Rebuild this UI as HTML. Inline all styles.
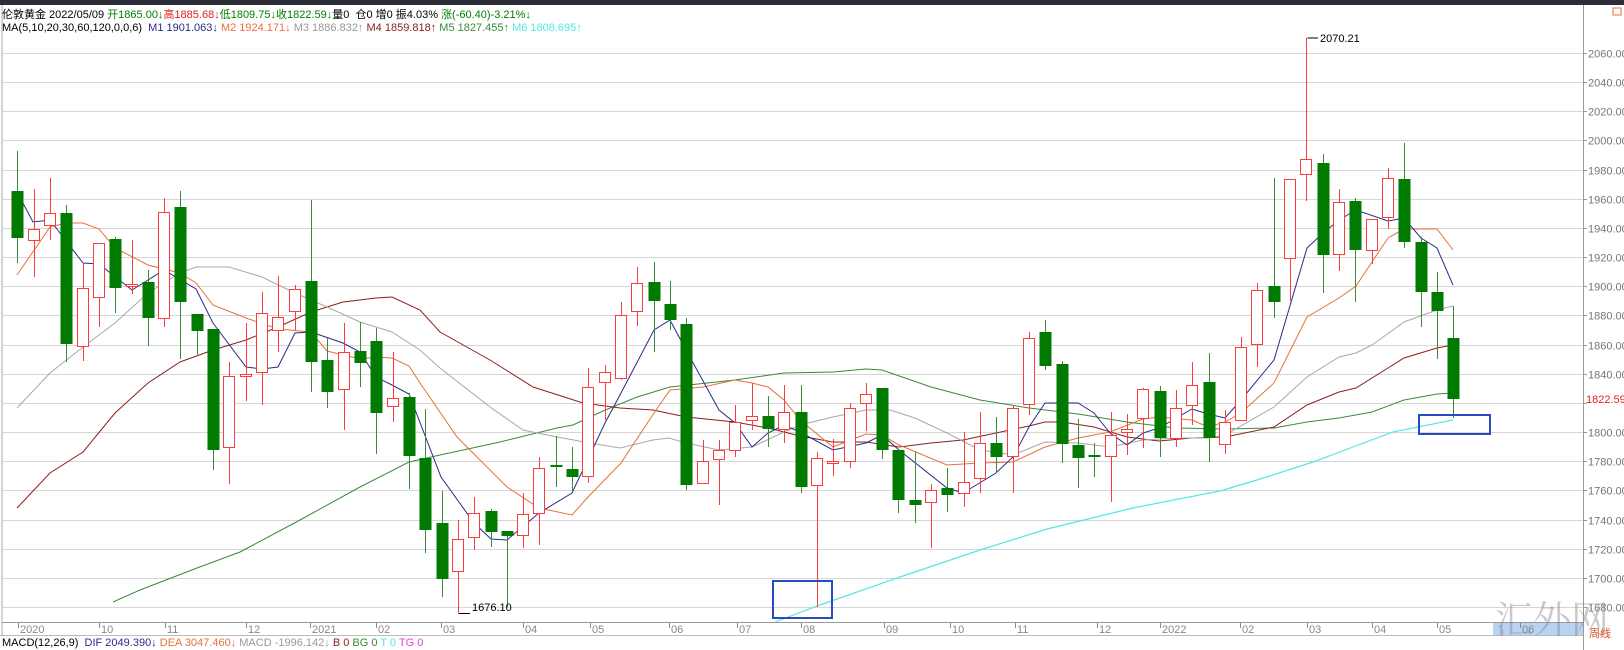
<!DOCTYPE html>
<html><head><meta charset="utf-8">
<style>
html,body{margin:0;padding:0;background:#fff;}
body{width:1624px;height:650px;overflow:hidden;position:relative;font-family:"Liberation Sans","Noto Sans CJK SC",sans-serif;}
svg{position:absolute;left:0;top:0;}
.t{position:absolute;font-size:11px;white-space:nowrap;line-height:13px;}
</style></head><body>
<svg id="s" width="1624" height="650" xmlns="http://www.w3.org/2000/svg"></svg>
<div class="t" style="left:2px;top:9px;color:#000">伦敦黄金 2022/05/09 <span style="color:#008000">开1865.00↓</span><span style="color:#e02020">高1885.68↓</span><span style="color:#008000">低1809.75↓</span><span style="color:#008000">收1822.59↓</span>量0&nbsp; 仓0 增0 振4.03% <span style="color:#008000">涨(-60.40)-3.21%↓</span></div>
<div class="t" style="left:2px;top:22px;color:#000">MA(5,10,20,30,60,120,0,0,6)&nbsp; <span style="color:#2b2b8a">M1 1901.063↓</span> <span style="color:#e8703a">M2 1924.171↓</span> <span style="color:#999">M3 1886.832↑</span> <span style="color:#8b2020">M4 1859.818↑</span> <span style="color:#3a8a3a">M5 1827.455↑</span> <span style="color:#55e5e5">M6 1808.695↑</span></div>
<div class="t" style="left:2px;top:637px;color:#000">MACD(12,26,9)&nbsp; <span style="color:#2b2b8a">DIF 2049.390↓</span> <span style="color:#e8703a">DEA 3047.460↓</span> <span style="color:#999">MACD -1996.142↓</span> <span style="color:#8b2020">B 0</span> <span style="color:#3a8a3a">BG 0</span> <span style="color:#55e5e5">T 0</span> <span style="color:#e040e0">TG 0</span></div>
<script>
var s=document.getElementById('s'),h='';
function Y(p){return 53+(2060-p)*1.458;}
h+='<rect x="0" y="0" width="1624" height="5" fill="#2a2d36"/>';
h+='<line x1="2" y1="5" x2="2" y2="635" stroke="#aaa"/>';
for(var p=2060;p>=1680;p-=20){var y=Math.round(Y(p))+0.5;
h+='<line x1="2" y1="'+y+'" x2="1583" y2="'+y+'" stroke="#d6d6d6" stroke-width="1"/>';
h+='<line x1="1583" y1="'+y+'" x2="1587" y2="'+y+'" stroke="#999"/>';
if(p!=1820)h+='<text x="1588" y="'+(y+4)+'" font-size="11" fill="#777" font-family="Liberation Sans">'+p+'.00</text>';}
h+='<text x="1586" y="'+(Y(1822.59)+4)+'" font-size="11" fill="#e02020" font-family="Liberation Sans">1822.59</text>';
h+='<rect x="1613" y="8" width="8" height="7" fill="none" stroke="#e8703a"/>';
h+='<line x1="1583.5" y1="5" x2="1583.5" y2="650" stroke="#999"/>';
h+='<line x1="2" y1="622.5" x2="1583" y2="622.5" stroke="#999"/>';
h+='<line x1="0" y1="635.5" x2="1583" y2="635.5" stroke="#bbb"/>';
h+='<rect x="1493" y="623" width="90" height="12" fill="#b8d4f2"/>';
var ml=[[18,'2020'],[99,'10'],[165,'11'],[246,'12'],[310,'2021'],[376,'02'],[441,'03'],[523,'04'],[590,'05'],[669,'06'],[737,'07'],[801,'08'],[884,'09'],[950,'10'],[1015,'11'],[1097,'12'],[1160,'2022'],[1240,'02'],[1307,'03'],[1372,'04'],[1437,'05'],[1520,'06']];
ml.forEach(function(m){h+='<line x1="'+(m[0]+.5)+'" y1="623" x2="'+(m[0]+.5)+'" y2="628" stroke="#888"/><text x="'+(m[0]+2)+'" y="633" font-size="11" fill="#888" font-family="Liberation Sans">'+m[1]+'</text>';});
var C=[[191,238,151,263,1],[229,241,189,277,0],[213,226,178,240,0],[213,344,205,362,1],[288,347,263,361,0],[243,298,243,327,0],[239,288,237,313,1],[284,287,240,294,0],[282,318,270,346,1],[212,319,198,327,0],[207,302,191,359,1],[314,331,314,356,1],[329,450,329,470,1],[376,448,362,484,0],[374,377,323,401,0],[313,373,292,405,0],[317,331,276,352,0],[289,312,285,330,0],[281,362,200,392,1],[360,392,338,408,1],[352,390,323,430,0],[351,363,322,387,1],[341,413,328,454,1],[398,407,352,422,0],[397,456,393,489,1],
[458,530,409,553,1],[523,579,491,597,1],[539,572,520,613,0],[513,538,497,550,0],[511,532,509,547,1],[531,536,531,607,1],[514,536,493,548,0],[468,514,457,545,0],[465,466,436,487,1],[469,477,447,492,1],[387,477,368,483,0],[372,383,365,420,0],[315,379,302,380,0],[283,312,267,326,0],[282,301,262,352,1],[304,320,281,330,1],[324,485,318,490,1],[461,484,440,484,0],[450,460,440,505,0],[422,451,405,457,0],[416,421,383,430,0],[416,429,396,447,1],[412,430,385,443,0],[412,487,385,493,1],[458,486,452,607,0],
[461,464,439,476,0],[408,462,403,468,0],[394,404,383,431,0],[388,450,388,459,1],[450,500,450,513,1],[500,505,452,523,1],[490,503,484,548,0],[488,495,468,512,1],[482,494,432,507,0],[443,479,412,493,0],[443,457,417,473,1],[408,457,406,493,0],[338,405,332,415,0],[332,366,320,370,1],[364,444,361,463,1],[445,458,419,488,1],[455,457,443,477,1],[435,457,412,502,0],[429,433,414,455,0],[389,419,388,448,0],[391,438,386,457,1],[408,439,390,447,0],[385,406,362,425,0],[382,438,353,462,1],
[422,445,410,454,0],[347,421,337,421,0],[290,345,283,367,0],[286,302,178,318,1],[179,259,179,301,0],[159,175,38,201,0],[163,255,154,293,1],[202,255,189,271,0],[201,250,198,302,1],[219,251,219,264,0],[178,218,168,229,0],[179,242,143,248,1],[242,292,237,327,1],[292,311,272,359,1],[338,399,306,418,1]];
function L(pts,c,w){return '<polyline fill="none" stroke="'+c+'" stroke-width="'+(w||1)+'" points="'+pts.map(function(a){return a.join(',')}).join(' ')+'"/>';}
h+=L([[113,602],[140,590],[197,568],[240,552],[300,520],[360,487],[409,462],[440,455],[500,442],[557,428],[573,425],[603,411],[637,397],[670,387],[735,380],[784,373],[833,372],[866,369],[882,370],[931,387],[980,400],[1029,408],[1078,414],[1127,422],[1176,428],[1225,429],[1274,428],[1307,422],[1339,418],[1372,412],[1404,400],[1437,394],[1453,393]],'#3a8a3a');
h+=L([[17,508],[50,473],[83,452],[115,413],[148,383],[180,362],[213,350],[246,340],[278,327],[311,312],[343,302],[376,298],[392,297],[420,310],[440,332],[490,360],[533,387],[583,403],[620,408],[653,410],[686,417],[735,422],[768,428],[800,436],[833,442],[866,442],[899,447],[931,443],[963,440],[996,433],[1029,426],[1045,422],[1062,422],[1094,427],[1127,437],[1159,441],[1192,438],[1225,437],[1274,427],[1307,405],[1339,392],[1356,388],[1388,368],[1404,358],[1437,348],[1453,345]],'#8b2020');
h+=L([[17,408],[50,373],[83,347],[115,323],[148,293],[180,273],[196,267],[229,267],[262,277],[295,293],[327,307],[360,322],[392,332],[420,350],[440,368],[490,407],[523,430],[557,437],[590,443],[620,448],[653,440],[669,438],[686,443],[719,450],[752,447],[784,432],[800,425],[833,417],[866,410],[890,410],[915,418],[947,433],[980,450],[1013,455],[1045,442],[1078,443],[1110,447],[1143,440],[1176,438],[1208,438],[1225,435],[1274,407],[1307,377],[1339,357],[1356,353],[1372,345],[1404,322],[1437,310],[1453,306]],'#a8a8a8');
h+=L([[17,275],[50,227],[66,223],[83,223],[99,229],[115,248],[148,265],[180,273],[196,283],[213,305],[246,318],[278,329],[311,332],[327,351],[360,359],[376,357],[392,358],[409,366],[420,383],[457,437],[507,487],[539,508],[572,515],[588,497],[621,463],[654,413],[670,390],[703,387],[735,380],[752,383],[768,387],[784,400],[800,420],[833,447],[866,434],[882,435],[899,445],[947,465],[980,463],[1013,462],[1045,447],[1078,438],[1110,432],[1143,419],[1159,417],[1192,420],[1208,427],[1225,422],[1241,413],[1274,383],[1307,317],[1339,298],[1356,286],[1388,238],[1404,229],[1437,229],[1453,250]],'#e8703a');
h+=L([[17,192],[33,222],[50,220],[83,263],[99,264],[132,290],[164,270],[196,289],[213,323],[246,367],[262,369],[278,367],[295,333],[311,332],[343,343],[360,352],[376,377],[392,385],[409,394],[441,477],[474,523],[491,539],[507,540],[539,513],[572,493],[605,423],[621,393],[654,330],[670,320],[686,350],[719,410],[735,423],[752,447],[768,433],[784,425],[800,432],[833,450],[866,443],[882,435],[899,450],[947,488],[963,493],[996,473],[1013,457],[1029,427],[1045,403],[1078,403],[1094,413],[1110,433],[1127,445],[1143,433],[1159,428],[1192,409],[1208,414],[1225,418],[1241,400],[1274,360],[1307,248],[1323,233],[1339,220],[1356,210],[1388,221],[1404,218],[1421,238],[1437,248],[1453,285]],'#2b2b8a');
h+=L([[775,622],[820,605],[900,577],[980,550],[1047,529],[1133,508],[1220,491],[1257,480],[1313,462],[1353,447],[1393,432],[1453,420]],'#55e5e5',1.2);
C.forEach(function(c,i){var x=Math.round(17.3+i*16.318);
h+='<line x1="'+(x+.5)+'" y1="'+c[2]+'" x2="'+(x+.5)+'" y2="'+c[3]+'" stroke="'+(c[4]?'#3a8a3a':'#ff3a3a')+'"/>';
var hh=Math.max(c[1]-c[0],2);
if(c[4])h+='<rect x="'+(x-5.5)+'" y="'+c[0]+'" width="12" height="'+hh+'" fill="#007a00"/>';
else h+='<rect x="'+(x-5.5)+'" y="'+(c[0]+.5)+'" width="11" height="'+(hh-1)+'" fill="#fff" stroke="#ff3a3a"/>';});
h+='<polyline points="1307.5,38 1318,38" stroke="#000" fill="none"/><text x="1320" y="42" font-size="11" fill="#000" font-family="Liberation Sans">2070.21</text>';
h+='<polyline points="458.5,613.5 470,613.5" stroke="#000" fill="none"/><text x="472" y="611" font-size="11" fill="#000" font-family="Liberation Sans">1676.10</text>';
h+='<rect x="773" y="581" width="59" height="37" fill="none" stroke="#2a4ac0" stroke-width="2"/>';
h+='<rect x="1419" y="415" width="71" height="19" fill="none" stroke="#2a4ac0" stroke-width="2"/>';
h+='<text x="1495" y="633" font-size="38" fill="#888" fill-opacity="0.45" font-family="Noto Serif CJK SC,serif">汇外网</text>';
h+='<text x="1589" y="637" font-size="11" fill="#e05020" font-family="Noto Sans CJK SC,sans-serif">周线</text>';
s.innerHTML=h;
</script>
</body></html>
